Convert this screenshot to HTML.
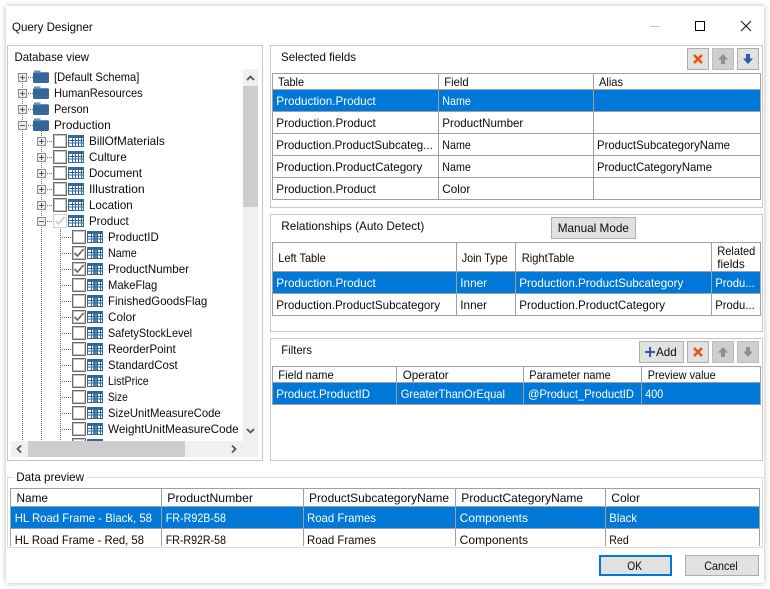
<!DOCTYPE html>
<html><head><meta charset="utf-8"><title>Query Designer</title>
<style>
html,body{margin:0;padding:0;background:#fff;width:770px;height:589px;overflow:hidden}
svg{display:block;position:absolute;left:0;top:0}
text{font-family:"Liberation Sans",sans-serif;font-size:12px;fill:#0a0a0a}
.w{fill:#fff}
.dot{stroke:#666;stroke-width:1;stroke-dasharray:1 1;fill:none}
.b{fill:none;stroke:#a0a0a0;stroke-width:1;shape-rendering:crispEdges}
.p{fill:#fff;stroke:#c6c6c6;stroke-width:1;shape-rendering:crispEdges}
</style></head><body>
<svg width="770" height="589" viewBox="0 0 770 589" xmlns="http://www.w3.org/2000/svg">
<defs>
<filter id="s" x="-5%" y="-5%" width="110%" height="110%"><feGaussianBlur stdDeviation="3"/></filter>
<symbol id="plus" width="9" height="9" viewBox="0 0 9 9"><rect x=".5" y=".5" width="8" height="8" fill="#eee" stroke="#888"/><path d="M2 4.500h5M4.500 2v5" stroke="#2f5f95" fill="none"/></symbol>
<symbol id="minus" width="9" height="9" viewBox="0 0 9 9"><rect x=".5" y=".5" width="8" height="8" fill="#eee" stroke="#888"/><path d="M2 4.500h5" stroke="#2f5f95" fill="none"/></symbol>
<symbol id="folder" width="16" height="13" viewBox="0 0 16 13"><path d="M1 1.700V.6h6.500v1.100z" fill="#34679c"/><path d="M0 3.500Q0 2.300 1.200 2.300H14.800Q16 2.300 16 3.500V11.800Q16 13 14.800 13H1.200Q0 13 0 11.800z" fill="#34679c"/></symbol>
<symbol id="tbl" width="16" height="12" viewBox="0 0 16 12"><rect width="16" height="12" fill="#34679c"/><path d="M1 3h14v8H1z" fill="#fff"/><path d="M4.500 3v8M7.500 3v8M10.500 3v8M13.500 3v8M1 5.500h14M1 8h14" stroke="#34679c" fill="none"/></symbol>
<symbol id="col" width="16" height="12" viewBox="0 0 16 12"><rect width="16" height="12" fill="#34679c"/><path d="M1 3h14v8H1z" fill="#fff"/><path d="M6 3h4v8H6z" fill="#5b8ec4"/><path d="M4.500 3v8M7.500 3v8M10.500 3v8M13.500 3v8M1 5.500h14M1 8h14" stroke="#34679c" fill="none"/></symbol>
<symbol id="cb" width="14" height="14" viewBox="0 0 14 14"><rect x=".5" y=".5" width="13" height="13" fill="#fff" stroke="#6e6e6e"/><rect x="1.500" y="1.500" width="11" height="11" fill="#fff" stroke="#c4c4c4"/></symbol>
<symbol id="cbc" width="14" height="14" viewBox="0 0 14 14"><rect x=".5" y=".5" width="13" height="13" fill="#fff" stroke="#6e6e6e"/><rect x="1.500" y="1.500" width="11" height="11" fill="#fff" stroke="#c4c4c4"/><path d="M2.500 7l3 3 6-7" stroke="#6a6a6a" stroke-width="1.700" fill="none"/></symbol>
<symbol id="cbd" width="14" height="14" viewBox="0 0 14 14"><rect x=".5" y=".5" width="13" height="13" fill="#fff" stroke="#d0d0d0"/><path d="M2.500 7l3 3 6-7" stroke="#cbcbcb" stroke-width="1.700" fill="none"/></symbol>
<symbol id="btnx" width="22" height="22" viewBox="0 0 22 22"><rect x=".5" y=".5" width="21" height="21" fill="#e1e1e1" stroke="#adadad"/><path d="M7 7l8 8M15 7l-8 8" stroke="#e8530e" stroke-width="2.600" fill="none"/></symbol>
<symbol id="btnup" width="22" height="22" viewBox="0 0 22 22"><rect x=".5" y=".5" width="21" height="21" fill="#cfcfcf" stroke="#bdbdbd"/><path d="M11 6l5 5.500h-3V16H9v-4.500H6z" fill="#8f8f8f"/></symbol>
<symbol id="btndn" width="22" height="22" viewBox="0 0 22 22"><rect x=".5" y=".5" width="21" height="21" fill="#cfcfcf" stroke="#bdbdbd"/><path d="M11 16l5-5.500h-3V6H9v4.500H6z" fill="#8f8f8f"/></symbol>
<symbol id="btndb" width="22" height="22" viewBox="0 0 22 22"><rect x=".5" y=".5" width="21" height="21" fill="#e1e1e1" stroke="#adadad"/><path d="M11 16l5-5.500h-3V6H9v4.500H6z" fill="#2f5ba8"/></symbol>
<clipPath id="treeclip"><rect x="11" y="69" width="232" height="372"/></clipPath>
<clipPath id="prev"><rect x="8" y="486" width="754" height="60"/></clipPath>
</defs>

<!-- window -->
<rect x="6" y="6" width="758" height="577" fill="#000" opacity=".28" filter="url(#s)"/>
<rect x="6" y="6" width="758" height="577" fill="#fff"/>
<text x="12" y="31" textLength="80.700" lengthAdjust="spacingAndGlyphs">Query Designer</text>
<path d="M650 26.500h10" stroke="#c8c8c8" fill="none" shape-rendering="crispEdges"/>
<rect x="695.500" y="21.500" width="9" height="9" fill="none" stroke="#000" shape-rendering="crispEdges"/>
<path d="M741 21l10 10M751 21l-10 10" stroke="#111" fill="none"/>

<!-- database view -->
<rect class="p" x="7.500" y="45.500" width="255" height="415"/>
<text x="14.500" y="61" textLength="74.500" lengthAdjust="spacingAndGlyphs">Database view</text>
<rect x="243" y="69" width="15" height="372" fill="#f0f0f0"/>
<rect x="243" y="86" width="15" height="121" fill="#cdcdcd"/>
<path d="M247 80l3.500-3.500 3.500 3.500" stroke="#555" stroke-width="1.800" fill="none"/>
<path d="M247 429l3.500 3.500 3.500-3.500" stroke="#555" stroke-width="1.800" fill="none"/>
<rect x="11" y="441" width="247" height="16" fill="#f0f0f0"/>
<rect x="28" y="441" width="157" height="16" fill="#cdcdcd"/>
<path d="M21 445.500l-3.500 3.500 3.500 3.500" stroke="#555" stroke-width="1.800" fill="none"/>
<path d="M232 445.500l3.500 3.500-3.500 3.500" stroke="#555" stroke-width="1.800" fill="none"/>

<g clip-path="url(#treeclip)">
<path class="dot" d="M22.500 77V441M41.500 129V441M60.500 229V441"/>
<path class="dot" d="M26 77.500h7M26 93.500h7M26 109.500h7M26 125.500h7"/>
<path class="dot" d="M45 141.500h8M45 157.500h8M45 173.500h8M45 189.500h8M45 205.500h8M45 221.500h8"/>
<path class="dot" d="M60 237.500h12M60 253.500h12M60 269.500h12M60 285.500h12M60 301.500h12M60 317.500h12M60 333.500h12M60 349.500h12M60 365.500h12M60 381.500h12M60 397.500h12M60 413.500h12M60 429.500h12M60 445.500h12"/>

<use href="#plus" x="18" y="73"/><use href="#folder" x="33" y="70"/><text x="54" y="81" textLength="85.300" lengthAdjust="spacingAndGlyphs">[Default Schema]</text>
<use href="#plus" x="18" y="89"/><use href="#folder" x="33" y="86"/><text x="54" y="97" textLength="88.700" lengthAdjust="spacingAndGlyphs">HumanResources</text>
<use href="#plus" x="18" y="105"/><use href="#folder" x="33" y="102"/><text x="54" y="113" textLength="34.700" lengthAdjust="spacingAndGlyphs">Person</text>
<use href="#minus" x="18" y="121"/><use href="#folder" x="33" y="118"/><text x="54" y="129" textLength="56.700" lengthAdjust="spacingAndGlyphs">Production</text>

<use href="#plus" x="37" y="137"/><use href="#cb" x="53" y="134"/><use href="#tbl" x="68" y="135"/><text x="89" y="145" textLength="75.700" lengthAdjust="spacingAndGlyphs">BillOfMaterials</text>
<use href="#plus" x="37" y="153"/><use href="#cb" x="53" y="150"/><use href="#tbl" x="68" y="151"/><text x="89" y="161" textLength="37.700" lengthAdjust="spacingAndGlyphs">Culture</text>
<use href="#plus" x="37" y="169"/><use href="#cb" x="53" y="166"/><use href="#tbl" x="68" y="167"/><text x="89" y="177" textLength="53" lengthAdjust="spacingAndGlyphs">Document</text>
<use href="#plus" x="37" y="185"/><use href="#cb" x="53" y="182"/><use href="#tbl" x="68" y="183"/><text x="89" y="193" textLength="55.700" lengthAdjust="spacingAndGlyphs">Illustration</text>
<use href="#plus" x="37" y="201"/><use href="#cb" x="53" y="198"/><use href="#tbl" x="68" y="199"/><text x="89" y="209" textLength="43.700" lengthAdjust="spacingAndGlyphs">Location</text>
<use href="#minus" x="37" y="217"/><use href="#cbd" x="53" y="214"/><use href="#tbl" x="68" y="215"/><text x="89" y="225" textLength="39.700" lengthAdjust="spacingAndGlyphs">Product</text>

<use href="#cb" x="72" y="230"/><use href="#col" x="87" y="231"/><text x="108" y="241" textLength="50.700" lengthAdjust="spacingAndGlyphs">ProductID</text>
<use href="#cbc" x="72" y="246"/><use href="#col" x="87" y="247"/><text x="108" y="257" textLength="28.700" lengthAdjust="spacingAndGlyphs">Name</text>
<use href="#cbc" x="72" y="262"/><use href="#col" x="87" y="263"/><text x="108" y="273" textLength="81" lengthAdjust="spacingAndGlyphs">ProductNumber</text>
<use href="#cb" x="72" y="278"/><use href="#col" x="87" y="279"/><text x="108" y="289" textLength="49.300" lengthAdjust="spacingAndGlyphs">MakeFlag</text>
<use href="#cb" x="72" y="294"/><use href="#col" x="87" y="295"/><text x="108" y="305" textLength="99.300" lengthAdjust="spacingAndGlyphs">FinishedGoodsFlag</text>
<use href="#cbc" x="72" y="310"/><use href="#col" x="87" y="311"/><text x="108" y="321" textLength="28" lengthAdjust="spacingAndGlyphs">Color</text>
<use href="#cb" x="72" y="326"/><use href="#col" x="87" y="327"/><text x="108" y="337" textLength="84" lengthAdjust="spacingAndGlyphs">SafetyStockLevel</text>
<use href="#cb" x="72" y="342"/><use href="#col" x="87" y="343"/><text x="108" y="353" textLength="67.700" lengthAdjust="spacingAndGlyphs">ReorderPoint</text>
<use href="#cb" x="72" y="358"/><use href="#col" x="87" y="359"/><text x="108" y="369" textLength="69.700" lengthAdjust="spacingAndGlyphs">StandardCost</text>
<use href="#cb" x="72" y="374"/><use href="#col" x="87" y="375"/><text x="108" y="385" textLength="40.700" lengthAdjust="spacingAndGlyphs">ListPrice</text>
<use href="#cb" x="72" y="390"/><use href="#col" x="87" y="391"/><text x="108" y="401" textLength="19.700" lengthAdjust="spacingAndGlyphs">Size</text>
<use href="#cb" x="72" y="406"/><use href="#col" x="87" y="407"/><text x="108" y="417" textLength="112.700" lengthAdjust="spacingAndGlyphs">SizeUnitMeasureCode</text>
<use href="#cb" x="72" y="422"/><use href="#col" x="87" y="423"/><text x="108" y="433" textLength="130.700" lengthAdjust="spacingAndGlyphs">WeightUnitMeasureCode</text>
<use href="#cb" x="72" y="438"/><use href="#col" x="87" y="439"/>
</g>

<!-- selected fields -->
<rect class="p" x="270.500" y="45.500" width="492" height="162"/>
<text x="281" y="61" textLength="75" lengthAdjust="spacingAndGlyphs">Selected fields</text>
<use href="#btnx" x="687" y="48"/><use href="#btnup" x="712" y="48"/><use href="#btndb" x="737" y="48"/>
<rect x="273" y="90" width="488" height="22" fill="#0078d7"/>
<rect class="b" x="272.500" y="73.500" width="488" height="126"/>
<path class="b" d="M272 89.500h489M272 111.500h489M272 133.500h489M272 155.500h489M272 177.500h489M438.500 73v127M593.500 73v127"/>
<text x="278" y="86" textLength="26" lengthAdjust="spacingAndGlyphs">Table</text><text x="444.300" y="86" textLength="24.400" lengthAdjust="spacingAndGlyphs">Field</text><text x="599" y="86" textLength="24" lengthAdjust="spacingAndGlyphs">Alias</text>
<text class="w" x="276.300" y="105" textLength="99.500" lengthAdjust="spacingAndGlyphs">Production.Product</text><text class="w" x="442.300" y="105" textLength="28.500" lengthAdjust="spacingAndGlyphs">Name</text>
<text x="276.300" y="127" textLength="99.500" lengthAdjust="spacingAndGlyphs">Production.Product</text><text x="442.300" y="127" textLength="81" lengthAdjust="spacingAndGlyphs">ProductNumber</text>
<text x="276.300" y="149" textLength="156.500" lengthAdjust="spacingAndGlyphs">Production.ProductSubcateg...</text><text x="442.300" y="149" textLength="28.500" lengthAdjust="spacingAndGlyphs">Name</text><text x="597" y="149" textLength="133" lengthAdjust="spacingAndGlyphs">ProductSubcategoryName</text>
<text x="276.300" y="171" textLength="146" lengthAdjust="spacingAndGlyphs">Production.ProductCategory</text><text x="442.300" y="171" textLength="28.500" lengthAdjust="spacingAndGlyphs">Name</text><text x="597" y="171" textLength="115" lengthAdjust="spacingAndGlyphs">ProductCategoryName</text>
<text x="276.300" y="193" textLength="99.500" lengthAdjust="spacingAndGlyphs">Production.Product</text><text x="442.300" y="193" textLength="28" lengthAdjust="spacingAndGlyphs">Color</text>

<!-- relationships -->
<rect class="p" x="270.500" y="214.500" width="492" height="117"/>
<text x="281.300" y="230" textLength="143" lengthAdjust="spacingAndGlyphs">Relationships (Auto Detect)</text>
<rect x="551.500" y="217.500" width="84" height="21" fill="#e1e1e1" stroke="#adadad" shape-rendering="crispEdges"/>
<text x="557.700" y="232" textLength="71.300" lengthAdjust="spacingAndGlyphs">Manual Mode</text>
<rect x="273" y="272" width="488" height="22" fill="#0078d7"/>
<rect class="b" x="272.500" y="242.500" width="488" height="73"/>
<path class="b" d="M272 271.500h489M272 293.500h489M456.500 242v74M515.500 242v74M711.500 242v74"/>
<text x="278.300" y="262" textLength="47.400" lengthAdjust="spacingAndGlyphs">Left Table</text><text x="461.700" y="262" textLength="46" lengthAdjust="spacingAndGlyphs">Join Type</text><text x="521.700" y="262" textLength="52.600" lengthAdjust="spacingAndGlyphs">RightTable</text>
<text x="717.300" y="255" textLength="38" lengthAdjust="spacingAndGlyphs">Related</text><text x="717.300" y="268" textLength="27.400" lengthAdjust="spacingAndGlyphs">fields</text>
<text class="w" x="276.300" y="287" textLength="99.500" lengthAdjust="spacingAndGlyphs">Production.Product</text><text class="w" x="460.300" y="287" textLength="26.700" lengthAdjust="spacingAndGlyphs">Inner</text><text class="w" x="519.300" y="287" textLength="164" lengthAdjust="spacingAndGlyphs">Production.ProductSubcategory</text><text class="w" x="715.300" y="287" textLength="39.400" lengthAdjust="spacingAndGlyphs">Produ...</text>
<text x="276.300" y="309" textLength="163.700" lengthAdjust="spacingAndGlyphs">Production.ProductSubcategory</text><text x="460.300" y="309" textLength="26.700" lengthAdjust="spacingAndGlyphs">Inner</text><text x="519.300" y="309" textLength="145.700" lengthAdjust="spacingAndGlyphs">Production.ProductCategory</text><text x="715.300" y="309" textLength="39.400" lengthAdjust="spacingAndGlyphs">Produ...</text>

<!-- filters -->
<rect class="p" x="270.500" y="338.500" width="492" height="122"/>
<text x="281.300" y="354" textLength="30.700" lengthAdjust="spacingAndGlyphs">Filters</text>
<rect x="639.500" y="341.500" width="44" height="21" fill="#e1e1e1" stroke="#adadad" shape-rendering="crispEdges"/>
<path d="M645 352h10M650 347v10" stroke="#2f5ba8" stroke-width="2" fill="none"/>
<text x="656" y="356" textLength="20.700" lengthAdjust="spacingAndGlyphs">Add</text>
<use href="#btnx" x="687" y="341"/><use href="#btnup" x="712" y="341"/><use href="#btndn" x="737" y="341"/>
<rect x="273" y="383" width="488" height="21" fill="#0078d7"/>
<rect class="b" x="272.500" y="366.500" width="488" height="38"/>
<path class="b" d="M272 382.500h489M396.500 366v39M523.500 366v39M641.500 366v39"/>
<text x="278.300" y="379" textLength="55.400" lengthAdjust="spacingAndGlyphs">Field name</text><text x="402.700" y="379" textLength="46" lengthAdjust="spacingAndGlyphs">Operator</text><text x="529.300" y="379" textLength="81.400" lengthAdjust="spacingAndGlyphs">Parameter name</text><text x="647.700" y="379" textLength="68" lengthAdjust="spacingAndGlyphs">Preview value</text>
<text class="w" x="276.300" y="398" textLength="93.700" lengthAdjust="spacingAndGlyphs">Product.ProductID</text><text class="w" x="400.700" y="398" textLength="104.300" lengthAdjust="spacingAndGlyphs">GreaterThanOrEqual</text><text class="w" x="528" y="398" textLength="106" lengthAdjust="spacingAndGlyphs">@Product_ProductID</text><text class="w" x="645.300" y="398" textLength="18" lengthAdjust="spacingAndGlyphs">400</text>

<!-- data preview -->
<rect x="7.500" y="477.500" width="755" height="70" fill="#fff" stroke="#dcdcdc" shape-rendering="crispEdges"/>
<rect x="14" y="470" width="73" height="14" fill="#fff"/>
<text x="16.300" y="481" textLength="67.700" lengthAdjust="spacingAndGlyphs">Data preview</text>
<g clip-path="url(#prev)">
<rect x="11" y="507" width="748" height="22" fill="#0078d7"/>
<rect class="b" x="10.500" y="488.500" width="749" height="70"/>
<path class="b" d="M10 506.500h750M10 528.500h750M161.500 488v60M303.500 488v60M455.500 488v60M605.500 488v60"/>
<text x="16.500" y="502" textLength="31.500" lengthAdjust="spacingAndGlyphs">Name</text><text x="167.300" y="502" textLength="85.700" lengthAdjust="spacingAndGlyphs">ProductNumber</text><text x="309" y="502" textLength="140" lengthAdjust="spacingAndGlyphs">ProductSubcategoryName</text><text x="461.300" y="502" textLength="121.700" lengthAdjust="spacingAndGlyphs">ProductCategoryName</text><text x="611.300" y="502" textLength="28.700" lengthAdjust="spacingAndGlyphs">Color</text>
<text class="w" x="14.700" y="522" textLength="137.300" lengthAdjust="spacingAndGlyphs">HL Road Frame - Black, 58</text><text class="w" x="165.700" y="522" textLength="60.300" lengthAdjust="spacingAndGlyphs">FR-R92B-58</text><text class="w" x="307" y="522" textLength="69" lengthAdjust="spacingAndGlyphs">Road Frames</text><text class="w" x="459.700" y="522" textLength="68.300" lengthAdjust="spacingAndGlyphs">Components</text><text class="w" x="609.300" y="522" textLength="27.700" lengthAdjust="spacingAndGlyphs">Black</text>
<text x="14.700" y="544" textLength="129.300" lengthAdjust="spacingAndGlyphs">HL Road Frame - Red, 58</text><text x="165.700" y="544" textLength="60.300" lengthAdjust="spacingAndGlyphs">FR-R92R-58</text><text x="307" y="544" textLength="69" lengthAdjust="spacingAndGlyphs">Road Frames</text><text x="459.700" y="544" textLength="68.300" lengthAdjust="spacingAndGlyphs">Components</text><text x="609.300" y="544" textLength="19.400" lengthAdjust="spacingAndGlyphs">Red</text>
</g>

<!-- buttons -->
<rect x="600" y="556" width="71" height="19" fill="#e1e1e1" stroke="#0078d7" stroke-width="2" shape-rendering="crispEdges"/>
<text x="627.300" y="570" textLength="14.700" lengthAdjust="spacingAndGlyphs">OK</text>
<rect x="685.500" y="555.500" width="73" height="20" fill="#e1e1e1" stroke="#adadad" shape-rendering="crispEdges"/>
<text x="704.300" y="570" textLength="33.400" lengthAdjust="spacingAndGlyphs">Cancel</text>
</svg>
</body></html>
